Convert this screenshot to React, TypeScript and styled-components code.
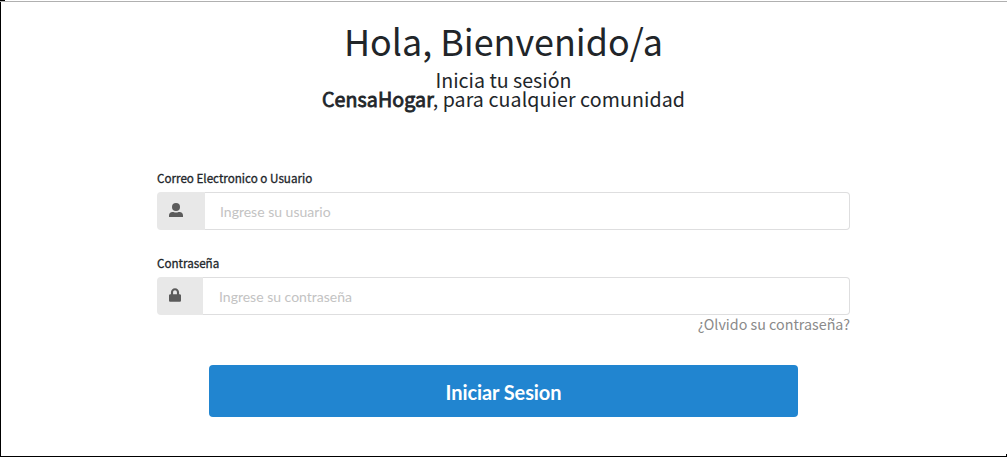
import React from "react";
import styled, { createGlobalStyle } from "styled-components";

const sans = '"Noto Sans CJK SC", "Noto Sans", sans-serif';

const Global = createGlobalStyle`
  * { box-sizing: border-box; }
  html, body { margin: 0; padding: 0; background: #fff; }
  body { font-family: Lato, "Liberation Sans", sans-serif; color: #212529; }
`;
const Frame = styled.div`
  width: 1007px; height: 458px; padding: 0 0 1px; overflow: hidden; background: #fff;
  display: flex; flex-direction: column;
`;
const TopEdge = styled.div`
  height: 2px; border-bottom: 1px solid #b0b0b0; flex: none;
`;
const Notch = styled.div`width: 5px; height: 1px; background: #000;`;
const Page = styled.main`
  flex: 1; min-height: 0; padding-right: 1px;
  border-left: 1px solid #000; border-bottom: 1px solid #000;
  background: linear-gradient(#000, #000) right bottom / 1px 2px no-repeat;
  display: flex; flex-direction: column; align-items: center;
`;
const Header = styled.header`
  flex: none; font-family: ${sans}; text-align: center; padding-top: 11px; height: 166px;
`;
const Title = styled.h1`
  margin: 0 0 3px; font-size: 35.9px; font-weight: 400; line-height: 54px; white-space: nowrap;
`;
const Subtitle = styled.p`
  margin: 0; font-size: 19.6px; line-height: 19px; white-space: nowrap;
`;
const Tagline = styled(Subtitle)`letter-spacing: 0.09px;`;
const Brand = styled.strong`font-weight: 400; -webkit-text-stroke: 0.8px currentColor;`;
const Form = styled.form`flex: none; width: 693px; display: flex; flex-direction: column;`;
const Group = styled.div`height: 85px;`;
const Label = styled.label`
  display: block; font: 400 11.65px/20px ${sans}; white-space: nowrap;
  -webkit-text-stroke: 0.3px currentColor;
`;
const Field = styled.div`
  height: 38px; display: flex; margin-top: 4px; border-radius: 4px;
`;
const Addon = styled.span<{ $width: number }>`
  width: ${p => p.$width}px; background: #e8e8e8; border-radius: 4px 0 0 4px; padding: 11px 0 0 12px;
  svg { display: block; }
`;
const Input = styled.input<{ $indent: number }>`
  flex: 1; border: 1px solid #dededf; border-left: 0; border-radius: 0 4px 4px 0;
  padding: 0 15px 0 ${p => p.$indent}px; font: 14px Lato, sans-serif; outline: none;
  &::placeholder { color: #c3c3c3; opacity: 1; }
`;
const Forgot = styled.a`
  display: block; text-align: right; font: 14.3px/18px ${sans}; color: #8a8a8a;
`;
const Button = styled.button`
  width: 589px; height: 52px; margin: 27px auto 0; border: 0; border-radius: 4px;
  background: #2185d0; color: #fff; font: bold 20px Lato, sans-serif; padding: 1px 0 0;
  letter-spacing: -0.1px;
`;
export default function App() {
  return <><Global /><Frame>
    <TopEdge><Notch /></TopEdge>
    <Page>
      <Header>
        <Title>Hola, Bienvenido/a</Title>
        <Subtitle>Inicia tu sesión</Subtitle>
        <Tagline><Brand>CensaHogar</Brand>, para cualquier comunidad</Tagline>
      </Header>
      <Form>
        <Group>
          <Label>Correo Electronico o Usuario</Label>
          <Field>
            <Addon $width={48}>
              <svg width="14" height="14" viewBox="0 0 14 14" fill="#5b5b5b"><circle cx="7" cy="4" r="4" /><path d="M0 14v-1.500C0 10.300 1.400 9 3.400 9H4.500q2.500 1 5 0h1.100C12.600 9 14 10.300 14 12.500V14z" /></svg>
            </Addon>
            <Input $indent={15} placeholder="Ingrese su usuario" />
          </Field>
        </Group>
        <Group>
          <Label>Contraseña</Label>
          <Field>
            <Addon $width={46}>
              <svg width="12" height="14" viewBox="0 0 448 512" fill="#5b5b5b"><path d="M400 224h-24v-72C376 68.200 307.800 0 224 0S72 68.200 72 152v72H48c-26.500 0-48 21.500-48 48v192c0 26.500 21.500 48 48 48h352c26.500 0 48-21.500 48-48V272c0-26.500-21.500-48-48-48zm-104 0H152v-72c0-39.700 32.300-72 72-72s72 32.300 72 72v72z" /></svg>
            </Addon>
            <Input $indent={16} placeholder="Ingrese su contraseña" />
          </Field>
          <Forgot>¿Olvido su contraseña?</Forgot>
        </Group>
        <Button type="button">Iniciar Sesion</Button>
      </Form>
    </Page>
  </Frame></>;
}
